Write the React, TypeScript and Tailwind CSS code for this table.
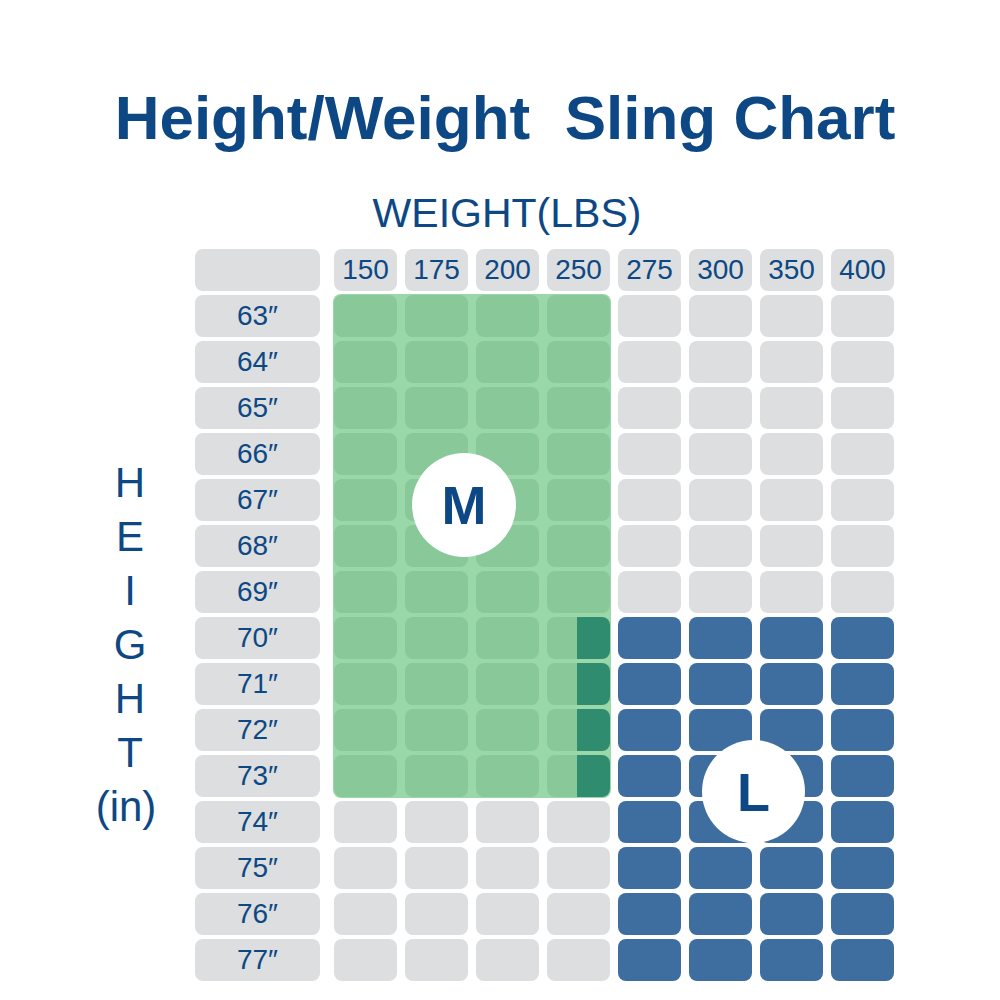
const weights = ["150", "175", "200", "250", "275", "300", "350", "400"];
const heights = ["63", "64", "65", "66", "67", "68", "69", "70", "71", "72", "73", "74", "75", "76", "77"];

const navy = "text-[#0d4884]";

// which cells belong to the grey remainder (not in M zone, not in L zone)
function isGreen(row: number, col: number) {
  return row <= 10 && col <= 3;
}
function isBlue(row: number, col: number) {
  return row >= 7 && col >= 4;
}

function GreyCell() {
  return <div className="rounded-[8px] bg-[#dcdedf]" />;
}

export default function App() {
  return (
    <div
      className="flex h-[1000px] w-[1000px] flex-col bg-white"
      style={{ fontFamily: '"Liberation Sans", Arial, sans-serif' }}
    >
      <h1 className={`mt-[87px] pl-[10px] text-center text-[62px] font-bold leading-none whitespace-pre ${navy}`}>
        {"Height/Weight  Sling Chart"}
      </h1>
      <div className={`mt-[44px] pl-[14px] text-center text-[41px] leading-none ${navy}`}>WEIGHT(LBS)</div>

      <div className="mt-[15px] flex pl-[90px]">
        {/* vertical axis label */}
        <div className={`flex w-[80px] flex-col items-center pt-[207px] text-[42px] leading-[54px] ${navy}`}>
          {["H", "E", "I", "G", "H", "T"].map((ch, i) => (
            <span key={i}>{ch}</span>
          ))}
          <span className="-ml-2">(in)</span>
        </div>

        <div className="ml-[25px] grid grid-cols-[131px_repeat(8,63px)] grid-rows-[repeat(16,42px)] gap-x-2 gap-y-1">
          {/* M zone */}
          <div className="relative col-start-2 col-span-4 row-start-2 row-span-11 -m-px rounded-[8px] bg-[#9bd8a9] p-px">
            <div className="grid h-full grid-cols-4 grid-rows-[repeat(11,1fr)] gap-x-2 gap-y-1">
              {heights.slice(0, 11).map((h, r) =>
                weights.slice(0, 4).map((w, c) =>
                  c === 3 && r >= 7 ? (
                    <div
                      key={h + w}
                      className="rounded-[8px] bg-[linear-gradient(to_right,#89c999_48%,#2f8c6e_48%)]"
                    />
                  ) : (
                    <div key={h + w} className="rounded-[8px] bg-[#89c999]" />
                  ),
                ),
              )}
            </div>
            <div className="absolute left-[79px] top-[159px] flex h-[104px] w-[104px] items-center justify-center rounded-full bg-white">
              <span className={`text-[54px] font-bold leading-none ${navy}`}>M</span>
            </div>
          </div>

          {/* L zone */}
          <div className="relative col-start-6 col-span-4 row-start-9 row-span-8 grid grid-cols-4 grid-rows-[repeat(8,42px)] gap-x-2 gap-y-1">
            {heights.slice(7).map((h) =>
              weights.slice(4).map((w) => <div key={h + w} className="rounded-[8px] bg-[#3d6e9f]" />),
            )}
            <div className="absolute left-[84px] top-[123px] flex h-[103px] w-[103px] items-center justify-center rounded-full bg-white">
              <span className={`text-[54px] font-bold leading-none ${navy}`}>L</span>
            </div>
          </div>

          {/* header row */}
          <div className="w-[125px] rounded-[8px] bg-[#dcdedf]" />
          {weights.map((w) => (
            <div
              key={w}
              className={`flex items-center justify-center rounded-[8px] bg-[#dcdedf] text-[28px] ${navy}`}
            >
              {w}
            </div>
          ))}

          {/* height rows */}
          {heights.map((h, r) => [
            <div
              key={"l" + h}
              className={`col-start-1 flex w-[125px] items-center justify-center rounded-[8px] bg-[#dcdedf] text-[28px] ${navy}`}
            >
              {h}″
            </div>,
            ...weights.map((w, c) =>
              isGreen(r, c) || isBlue(r, c) ? null : <GreyCell key={h + w} />,
            ),
          ])}
        </div>
      </div>
    </div>
  );
}
